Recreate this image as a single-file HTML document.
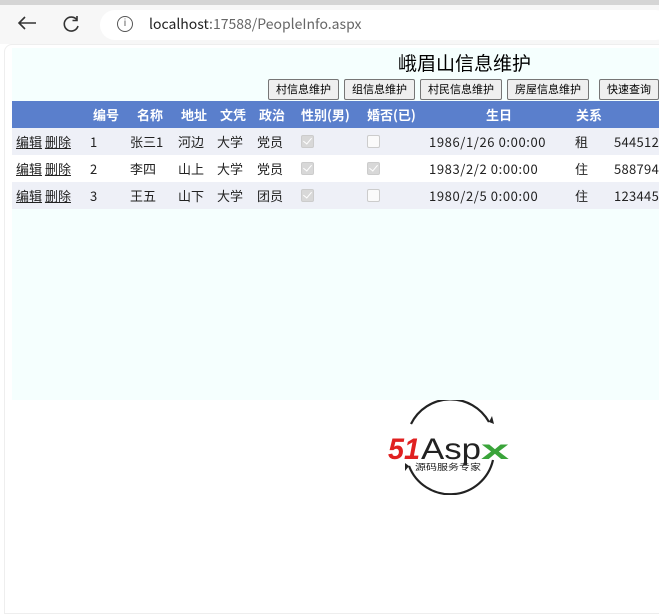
<!DOCTYPE html>
<html><head><meta charset="utf-8"><style>
*{margin:0;padding:0;box-sizing:border-box}
body{width:659px;height:607px;overflow:hidden;background:#fff;font-family:"Noto Sans CJK SC","Liberation Sans",sans-serif;position:relative}
.a{position:absolute}
.bar{left:0;top:0;width:659px;height:44px;background:#f7f7f7;border-top:5px solid #d5d5d5}
.url{left:100px;top:10px;width:570px;height:30px;background:#fff;border-radius:15px}
.page{left:4px;top:44px;width:660px;height:570px;background:#fff;border-radius:8px 0 0 0;border:1px solid #eee}
.cont{left:12px;top:48px;width:647px;height:352px;background:#f5fffe}
.btn{top:79px;height:21px;background:#efefef;border:1px solid #767676;border-radius:2px;font-size:11px;line-height:19px;text-align:center;color:#000}
.hdr{left:12px;top:101px;width:647px;height:27px;background:#5a7fcc}
.row{left:12px;width:647px;height:27px}
.t{font-size:13px;line-height:17px;color:#222;white-space:nowrap}
.d{letter-spacing:0.6px}
.n{letter-spacing:0.3px}
.h{font-size:13px;line-height:17px;color:#fff;font-weight:bold;top:106px;white-space:nowrap}
.cb{width:13px;height:13px;border:1px solid #ccc;border-radius:2px;background:#fafafa}
.cb.c{background:#d8d8d8;border-color:#ccc}
.cb.c::after{content:"";position:absolute;left:3px;top:0px;width:4px;height:7px;border:solid #fff;border-width:0 1.5px 1.5px 0;transform:rotate(40deg)}
u{text-decoration:underline}
</style></head><body>
<div class="a bar"></div>
<div class="a url"></div>
<svg class="a" style="left:17px;top:15px" width="20" height="16" viewBox="0 0 20 16"><path d="M19 8H2M8 2L2 8L8 14" fill="none" stroke="#333" stroke-width="1.6"/></svg>
<svg class="a" style="left:62px;top:14px" width="20" height="20" viewBox="0 0 20 20"><path d="M15 6A7 7 0 1 0 16 12" fill="none" stroke="#333" stroke-width="1.6"/><path d="M15 2V6.5H10.5" fill="none" stroke="#333" stroke-width="1.6"/></svg>
<div class="a" style="left:117px;top:16px;width:16px;height:16px;border:1.3px solid #555;border-radius:50%;font-size:10px;text-align:center;line-height:13px;color:#555;font-family:'Liberation Sans'">i</div>
<div class="a" style="left:149px;top:15px;font-size:14px;line-height:18px;color:#222">localhost<span style="color:#666">:17588/PeopleInfo.aspx</span></div>
<div class="a page"></div>
<div class="a cont"></div>
<div class="a" style="left:398px;top:50px;font-size:19px;line-height:25px;color:#000">峨眉山信息维护</div>
<div class="a btn" style="left:268px;width:71px">村信息维护</div>
<div class="a btn" style="left:344px;width:71px">组信息维护</div>
<div class="a btn" style="left:420px;width:82px">村民信息维护</div>
<div class="a btn" style="left:507px;width:82px">房屋信息维护</div>
<div class="a btn" style="left:599px;width:60px">快速查询</div>
<div class="a hdr"></div>
<div class="a h" style="left:93px">编号</div>
<div class="a h" style="left:137px">名称</div>
<div class="a h" style="left:181px">地址</div>
<div class="a h" style="left:220px">文凭</div>
<div class="a h" style="left:259px">政治</div>
<div class="a h" style="left:301px">性别(男)</div>
<div class="a h" style="left:367px">婚否(已)</div>
<div class="a h" style="left:486px">生日</div>
<div class="a h" style="left:576px">关系</div>
<div class="a row" style="top:128px;background:#eef0f7"></div>
<div class="a row" style="top:155px;background:#fff"></div>
<div class="a row" style="top:182px;background:#eef0f7"></div>

<div class="a t" style="left:16px;top:133px"><u>编辑</u> <u>删除</u></div>
<div class="a t" style="left:90px;top:133px">1</div>
<div class="a t" style="left:130px;top:133px">张三1</div>
<div class="a t" style="left:178px;top:133px">河边</div>
<div class="a t" style="left:217px;top:133px">大学</div>
<div class="a t" style="left:257px;top:133px">党员</div>
<div class="a cb c" style="left:301px;top:135px"></div>
<div class="a cb" style="left:367px;top:135px"></div>
<div class="a t d" style="left:429px;top:133px">1986/1/26 0:00:00</div>
<div class="a t" style="left:575px;top:133px">租</div>
<div class="a t n" style="left:614px;top:133px">544512</div>

<div class="a t" style="left:16px;top:160px"><u>编辑</u> <u>删除</u></div>
<div class="a t" style="left:90px;top:160px">2</div>
<div class="a t" style="left:130px;top:160px">李四</div>
<div class="a t" style="left:178px;top:160px">山上</div>
<div class="a t" style="left:217px;top:160px">大学</div>
<div class="a t" style="left:257px;top:160px">党员</div>
<div class="a cb c" style="left:301px;top:162px"></div>
<div class="a cb c" style="left:367px;top:162px"></div>
<div class="a t d" style="left:429px;top:160px">1983/2/2 0:00:00</div>
<div class="a t" style="left:575px;top:160px">住</div>
<div class="a t n" style="left:614px;top:160px">588794</div>

<div class="a t" style="left:16px;top:187px"><u>编辑</u> <u>删除</u></div>
<div class="a t" style="left:90px;top:187px">3</div>
<div class="a t" style="left:130px;top:187px">王五</div>
<div class="a t" style="left:178px;top:187px">山下</div>
<div class="a t" style="left:217px;top:187px">大学</div>
<div class="a t" style="left:257px;top:187px">团员</div>
<div class="a cb c" style="left:301px;top:189px"></div>
<div class="a cb" style="left:367px;top:189px"></div>
<div class="a t d" style="left:429px;top:187px">1980/2/5 0:00:00</div>
<div class="a t" style="left:575px;top:187px">住</div>
<div class="a t n" style="left:614px;top:187px">123445</div>

<svg class="a" style="left:385px;top:400px" width="130" height="95" viewBox="0 0 130 95">
<path d="M26 24A44 44 0 0 1 104 22" fill="none" stroke="#222" stroke-width="2.2"/>
<path d="M108 60A44 44 0 0 1 24 66" fill="none" stroke="#222" stroke-width="2.2"/>
<path d="M104 22l3 -6l2 8z" fill="#222"/>
<path d="M24 66l-4 5l0 -8z" fill="#222"/>
<text x="3" y="59" font-family="Liberation Sans" font-weight="bold" font-style="italic" font-size="30" fill="#e02020" textLength="32" lengthAdjust="spacingAndGlyphs">51</text>
<text x="36" y="59" font-family="Liberation Sans" font-size="30" fill="#222" textLength="60" lengthAdjust="spacingAndGlyphs">Asp</text>
<text x="96" y="59" font-family="Liberation Sans" font-weight="bold" font-size="28" fill="#3aa43a" textLength="28" lengthAdjust="spacingAndGlyphs">x</text>
<text x="30" y="70" font-family="Noto Sans CJK SC" font-size="8.5" fill="#222" textLength="66" lengthAdjust="spacingAndGlyphs">源码服务专家</text>
</svg>
</body></html>
